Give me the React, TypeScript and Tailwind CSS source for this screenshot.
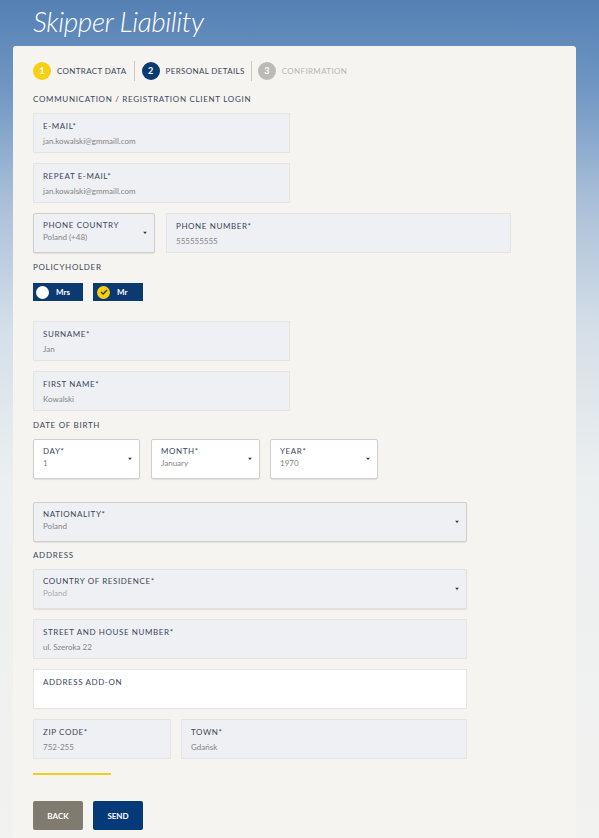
import React from "react";

const font = { fontFamily: "Lato, 'Open Sans', sans-serif" };

function Caret() {
  return (
    <svg width="4" height="3" viewBox="0 0 4 3" className="absolute right-[7px] top-1/2 -translate-y-1/2">
      <path d="M0 0 L4 0 L2 2.5 Z" fill="#333" />
    </svg>
  );
}

function Field({
  label,
  value,
  className = "",
  white = false,
  valueClass = "text-[#838383]",
}: {
  label: string;
  value?: string;
  className?: string;
  white?: boolean;
  valueClass?: string;
}) {
  return (
    <div
      className={`h-[40px] px-[9px] pt-[7px] border border-[#e4e4e2] ${white ? "bg-white" : "bg-[#eff0f3]"} ${className}`}
    >
      <div className="text-[8px] leading-[10px] tracking-[0.6px] text-[#3a475c]">{label}</div>
      {value !== undefined && (
        <div className={`mt-[5px] text-[8px] leading-[10px] ${valueClass}`}>{value}</div>
      )}
    </div>
  );
}

function Select({
  label,
  value,
  className = "",
  white = false,
  valueClass = "text-[#838383]",
}: {
  label: string;
  value: string;
  className?: string;
  white?: boolean;
  valueClass?: string;
}) {
  return (
    <div
      className={`relative h-[40px] px-[9px] pt-[6px] border border-[#cfcfcc] rounded-[2px] shadow-[0_1px_1px_rgba(0,0,0,0.08)] ${white ? "bg-white" : "bg-[#eff0f3]"} ${className}`}
    >
      <div className="text-[8px] leading-[10px] tracking-[0.6px] text-[#3a475c]">{label}</div>
      <div className={`mt-[2px] text-[8px] leading-[10px] ${valueClass}`}>{value}</div>
      <Caret />
    </div>
  );
}

function SectionLabel({ children, className = "" }: { children: React.ReactNode; className?: string }) {
  return (
    <div className={`text-[8px] leading-[12px] tracking-[0.7px] text-[#3a475c] ${className}`}>{children}</div>
  );
}

function Step({
  n,
  text,
  circle,
  textColor,
}: {
  n: string;
  text: string;
  circle: string;
  textColor: string;
}) {
  return (
    <div className="flex items-center">
      <div
        className={`w-[18px] h-[18px] rounded-full flex items-center justify-center text-white text-[9px] font-bold ${circle}`}
      >
        {n}
      </div>
      <div className={`ml-[6px] text-[8px] tracking-[0.35px] ${textColor}`}>{text}</div>
    </div>
  );
}

export default function App() {
  return (
    <div
      style={font}
      className="relative w-[599px] h-[838px] overflow-hidden bg-[linear-gradient(to_bottom,#5480b4_0px,#7197c3_90px,#a9bfd8_200px,#d5dfe8_330px,#eceff0_480px,#f2f2f0_838px)]"
    >
      <div className="pl-[33px] pt-[3px] h-[46px]">
        <h1 className="text-[28px] leading-[36px] italic font-light text-white tracking-[-0.4px]">
          Skipper Liability
        </h1>
      </div>
      <div className="ml-[13px] w-[563px] h-[800px] bg-[#f5f4f0] rounded-t-[3px] px-[20px] pt-[16px]">
        <div className="flex items-center h-[18px]">
          <Step n="1" text="CONTRACT DATA" circle="bg-[#f7cf13]" textColor="text-[#3a475c]" />
          <div className="mx-[7px] w-px h-[20px] bg-[#c9c7c0]" />
          <Step n="2" text="PERSONAL DETAILS" circle="bg-[#0a3a70]" textColor="text-[#3a475c]" />
          <div className="mx-[6px] w-px h-[20px] bg-[#c9c7c0]" />
          <Step n="3" text="CONFIRMATION" circle="bg-[#bcbab4]" textColor="text-[#b9b7b1]" />
        </div>

        <SectionLabel className="mt-[13px]">COMMUNICATION / REGISTRATION CLIENT LOGIN</SectionLabel>

        <div className="mt-[8px] flex flex-col gap-[10px]">
          <Field label="E-MAIL*" value="jan.kowalski@gmmaill.com" className="w-[257px]" />
          <Field label="REPEAT E-MAIL*" value="jan.kowalski@gmmaill.com" className="w-[257px]" />
          <div className="flex gap-[11px]">
            <Select label="PHONE COUNTRY" value="Poland (+48)" className="w-[122px]" />
            <Field label="PHONE NUMBER*" value="555555555" className="w-[345px]" />
          </div>
        </div>

        <SectionLabel className="mt-[8px]">POLICYHOLDER</SectionLabel>

        <div className="mt-[10px] flex gap-[10px]">
          <div className="w-[50px] h-[18px] bg-[#0a3a70] flex items-center pl-[3px]">
            <div className="w-[13px] h-[13px] rounded-full bg-white" />
            <span className="ml-[7px] text-[8px] font-bold text-white">Mrs</span>
          </div>
          <div className="w-[50px] h-[18px] bg-[#0a3a70] flex items-center pl-[4px]">
            <div className="w-[13px] h-[13px] rounded-full bg-[#f7cf13] flex items-center justify-center">
              <svg width="8" height="6" viewBox="0 0 8 6">
                <path d="M1 3 L3.2 5 L7 1" stroke="#3a3a2a" strokeWidth="1.4" fill="none" />
              </svg>
            </div>
            <span className="ml-[7px] text-[8px] font-bold text-white">Mr</span>
          </div>
        </div>

        <div className="mt-[20px] flex flex-col gap-[10px]">
          <Field label="SURNAME*" value="Jan" className="w-[257px]" />
          <Field label="FIRST NAME*" value="Kowalski" className="w-[257px]" />
        </div>

        <SectionLabel className="mt-[8px]">DATE OF BIRTH</SectionLabel>

        <div className="mt-[8px] flex">
          <Select label="DAY*" value="1" white className="w-[107px]" />
          <Select label="MONTH*" value="January" white className="ml-[11px] w-[109px]" />
          <Select label="YEAR*" value="1970" white className="ml-[10px] w-[108px]" />
        </div>

        <Select label="NATIONALITY*" value="Poland" className="mt-[23px] w-[434px]" />

        <SectionLabel className="mt-[7px]">ADDRESS</SectionLabel>

        <div className="mt-[8px] flex flex-col gap-[10px]">
          <Select
            label="COUNTRY OF RESIDENCE*"
            value="Poland"
            className="w-[434px] border-[#e0e0de]"
            valueClass="text-[#ababab]"
          />
          <Field label="STREET AND HOUSE NUMBER*" value="ul. Szeroka 22" className="w-[434px]" />
          <Field label="ADDRESS ADD-ON" white className="w-[434px]" />
          <div className="flex gap-[10px]">
            <Field label="ZIP CODE*" value="752-255" className="w-[138px]" />
            <Field label="TOWN*" value="Gdańsk" className="w-[286px]" />
          </div>
        </div>

        <div className="mt-[14px] w-[78px] h-[2px] bg-[#f5cd1c]" />

        <div className="mt-[26px] flex gap-[10px]">
          <button className="w-[50px] h-[29px] rounded-[2px] bg-[#7f7b6e] text-white text-[8px] font-bold">
            BACK
          </button>
          <button className="w-[50px] h-[29px] rounded-[2px] bg-[#053a78] text-white text-[8px] font-bold">
            SEND
          </button>
        </div>
      </div>
    </div>
  );
}
